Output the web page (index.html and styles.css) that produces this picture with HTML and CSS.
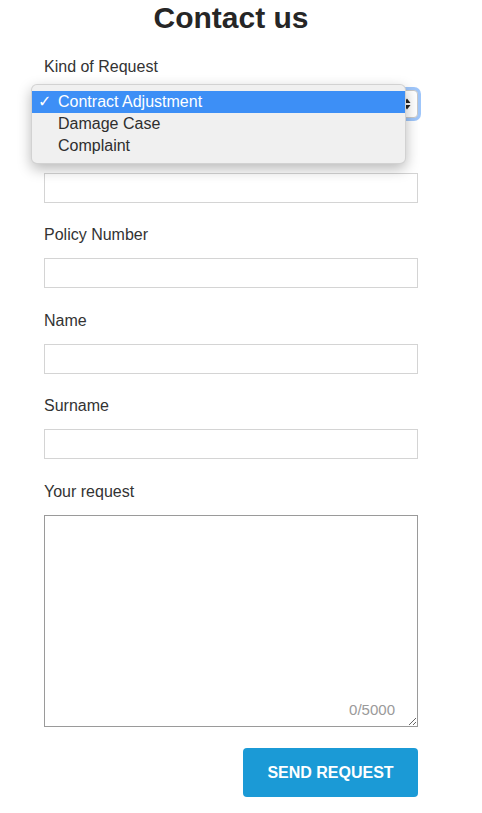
FILE: index.html
```html
<!DOCTYPE html>
<html lang="en">
<head>
<meta charset="utf-8">
<title>Contact us</title>
<link rel="stylesheet" href="styles.css">
</head>
<body>
<main class="page">
  <h1 class="title">Contact us</h1>
  <form class="form">
    <div class="field field-first">
      <label class="label" for="kind">Kind of Request</label>
      <div class="select-wrap">
        <select id="kind" class="select">
          <option>Contract Adjustment</option>
          <option>Damage Case</option>
          <option>Complaint</option>
        </select>
        <svg class="select-arrows" width="8" height="12" viewBox="0 0 8 12" aria-hidden="true">
          <path d="M4 0.5 L7.5 5 L0.5 5 Z" fill="#222"/>
          <path d="M4 11.5 L7.5 7 L0.5 7 Z" fill="#222"/>
        </svg>
      </div>
      <ul class="menu">
        <li class="menu-item selected"><span class="check">✓</span>Contract Adjustment</li>
        <li class="menu-item">Damage Case</li>
        <li class="menu-item">Complaint</li>
      </ul>
    </div>
    <div class="field">
      <label class="label" for="email" aria-label="E-Mail"></label>
      <input id="email" class="input" type="text">
    </div>
    <div class="field">
      <label class="label" for="policy">Policy Number</label>
      <input id="policy" class="input" type="text">
    </div>
    <div class="field field-wide">
      <label class="label" for="name">Name</label>
      <input id="name" class="input" type="text">
    </div>
    <div class="field">
      <label class="label" for="surname">Surname</label>
      <input id="surname" class="input" type="text">
    </div>
    <div class="field field-wide">
      <label class="label" for="request">Your request</label>
      <div class="textarea-wrap">
        <textarea id="request" class="textarea"></textarea>
        <span class="counter">0/5000</span>
      </div>
    </div>
    <div class="actions">
      <button type="button" class="button">SEND REQUEST</button>
    </div>
  </form>
</main>
</body>
</html>
```
FILE: styles.css
```css
* { box-sizing: border-box; }

html, body {
  margin: 0;
  padding: 0;
  background: #ffffff;
}

body {
  font-family: "Liberation Sans", Arial, Helvetica, sans-serif;
  color: #333333;
}

.page {
  width: 374px;
  margin-left: 44px;
}

.title {
  margin: 0;
  font-size: 30px;
  line-height: 36px;
  font-weight: 700;
  text-align: center;
  color: #262626;
}

.form {
  display: flex;
  flex-direction: column;
}

.field {
  display: flex;
  flex-direction: column;
  margin-top: 23px;
  position: relative;
}

.field-first {
  margin-top: 22px;
}

.field-wide {
  margin-top: 24px;
}

.label {
  display: block;
  height: 18px;
  font-size: 16px;
  line-height: 18px;
  margin-bottom: 14px;
  color: #333333;
}

.input {
  display: block;
  width: 100%;
  height: 30px;
  border: 1px solid #d4d4d4;
  background: #fff;
  margin: 0;
  padding: 0 8px;
  font: inherit;
}

.select-wrap {
  position: relative;
  height: 28px;
}

.select {
  appearance: none;
  -webkit-appearance: none;
  display: block;
  width: 100%;
  height: 28px;
  border: 1px solid #c9c9c9;
  border-radius: 4px;
  background: #fff;
  font: inherit;
  font-size: 16px;
  padding: 0 8px;
  margin: 0;
  box-shadow: 0 0 0 3px rgba(80, 152, 245, 0.55);
  outline: none;
}

.select-arrows {
  position: absolute;
  right: 7px;
  top: 8px;
}

.menu {
  position: absolute;
  left: -13px;
  top: 26px;
  width: 375px;
  margin: 0;
  padding: 6px 0;
  list-style: none;
  background: #f0f0f0;
  border: 1px solid rgba(0, 0, 0, 0.12);
  border-radius: 6px;
  box-shadow: 0 5px 14px rgba(0, 0, 0, 0.28);
  z-index: 2;
}

.menu-item {
  position: relative;
  height: 22px;
  line-height: 22px;
  padding-left: 26px;
  font-size: 16px;
  color: #2e2e2e;
}

.menu-item.selected {
  background: #3d8ff6;
  color: #ffffff;
}

.check {
  position: absolute;
  left: 6px;
  top: 0;
  font-family: "DejaVu Sans", sans-serif;
  font-size: 16px;
  font-weight: 700;
}

.textarea-wrap {
  position: relative;
  height: 212px;
}

.textarea {
  display: block;
  width: 100%;
  height: 212px;
  margin: 0;
  border: 1px solid #9a9a9a;
  background: #fff;
  resize: vertical;
  font: inherit;
  padding: 6px 8px;
}

.counter {
  position: absolute;
  right: 23px;
  bottom: 9px;
  font-size: 15px;
  line-height: 17px;
  color: #9a9a9a;
}

.actions {
  display: flex;
  justify-content: flex-end;
  margin-top: 21px;
}

.button {
  width: 175px;
  height: 49px;
  border: none;
  border-radius: 4px;
  background: #1b9ad6;
  color: #ffffff;
  font-family: "Liberation Sans", Arial, sans-serif;
  font-size: 16px;
  font-weight: 700;
  padding: 0;
  cursor: pointer;
}
```
